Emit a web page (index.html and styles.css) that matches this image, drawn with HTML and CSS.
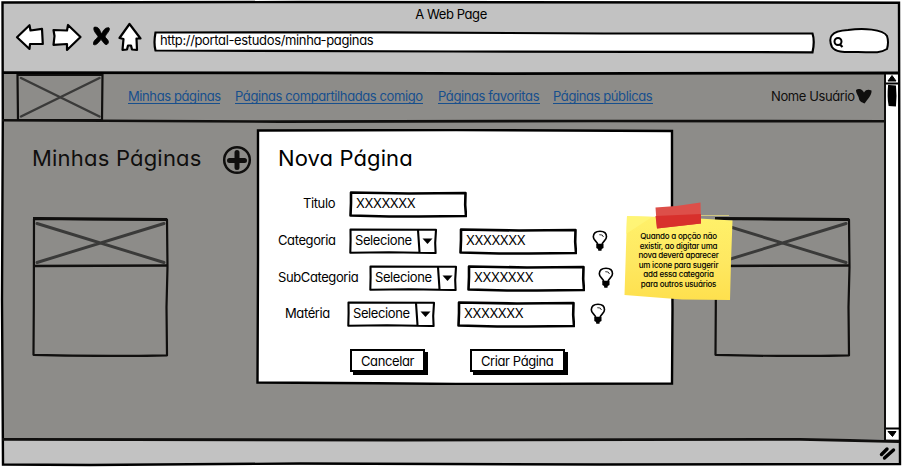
FILE: index.html
```
<!DOCTYPE html>
<html lang="pt-BR">
<head>
<meta charset="utf-8">
<title>A Web Page</title>
<link rel="stylesheet" href="styles.css">
</head>
<body>
<svg class="defs" aria-hidden="true">
  <symbol id="field" viewBox="0 0 118 27" preserveAspectRatio="none">
    <path d="M2 1.5 L60 2.5 L116.5 2 L116.200 14 L117 25 L70 25.5 L40 25.5 L1.5 24.5 L2 12 Z" fill="#fff" stroke="#000" stroke-width="2.6" stroke-linejoin="round"/>
  </symbol>
  <symbol id="select" viewBox="0 0 88 26">
    <path d="M1.5 1.5 L87 1.8 L86.2 15 L86.6 25 L40 24.3 L1.3 24.8 L1.6 12 Z M69 2 L70.5 24" fill="#fff" stroke="#000" stroke-width="2.1" stroke-linejoin="round"/>
    <path d="M73.500 10.500 H83.500 L78.500 16 Z"/>
  </symbol>
  <symbol id="card" viewBox="0 0 137 140">
    <path d="M2 2 L60 2.300 L135 2.700 L135.500 50 L134.500 90 L135 138.300 Q70 139.800 1.500 137.800 L1.800 90 Z" fill="none" stroke="#100f0e" stroke-width="2.200" stroke-linejoin="round"/>
    <path d="M1 1.400 L135 2.500" stroke="#100f0e" stroke-width="2.900"/>
    <path d="M2 49 L135 48.500" stroke="#100f0e" stroke-width="2.500"/>
    <path d="M5 6.500 L132 45.500 M5 45.500 L132 6.500" stroke="#3a3a39" stroke-width="2.900" stroke-linecap="round"/>
  </symbol>
  <symbol id="bulb" viewBox="0 0 16 22">
    <path d="M5.600 14.500 C5.600 11.500 1.200 10.500 1.300 6.700 C1.500 2.900 4.500 1.200 8 1.200 S14.500 3 14.500 6.700 C14.500 10.500 10.300 11.500 10.200 14.500 Z" fill="#fff" stroke="#000" stroke-width="1.600"/>
    <path d="M7.300 4.700 Q11 4.200 11.500 7" fill="none" stroke="#333" stroke-width="1"/>
    <path d="M4.300 14 H11.500 V18 L9.700 19 L9.500 20.700 H6.300 L6 19 L4.300 18 Z"/>
  </symbol>
</svg>
<div class="window">
  <header class="chrome">
    <div class="window-title"><span>A Web Page</span></div>
    <div class="toolbar">
      <svg class="nav-icons" viewBox="0 0 130 30">
        <g fill="#fff" stroke="#000" stroke-width="2.200" stroke-linejoin="round">
          <path d="M2 15.200 L14.500 3.200 L15.500 8.500 L27 6.800 L27.800 22 L15 22 L14.500 27 Z"/>
          <path d="M65.500 15 L53 3 L52 8.500 L38.500 8 L39.500 14 L38.500 22.800 L52 22 L52 28 Z"/>
          <path d="M114.500 2 L104.500 16 L108.500 17 L107.500 27.800 L112 27.500 L113 23.500 L116 23.500 L117 27.500 L122 28 L121.500 16.500 L125.500 16.500 Z"/>
        </g>
        <path d="M79 5.300 C84 4 85 9 86.500 12 C88 9 90 5 94 5.800 C96 8 91 12 90 15 C93 18 95 20 92 22.500 C89 23 88 19 86 17.500 C84 20 81 24 78.500 22.500 C78 18 82 17 83 14.500 C81 11 78 9 79 5.300Z" stroke="#000" stroke-width=".8"/>
      </svg>
      <div class="address">
        <svg class="fill" viewBox="0 0 661 23" preserveAspectRatio="none"><path d="M2.500 1.500 L230 1.300 L450 2.500 L658.500 2.500 Q661 10 658.500 21.300 L300 20.500 L2.500 19.500 Q.5 12 2.500 1.500Z" fill="#fff" stroke="#000" stroke-width="2.200"/></svg>
        <span>http://portal-estudos/minha-paginas</span>
      </div>
      <svg class="search" viewBox="0 0 62 26">
        <path d="M4 19 C0 10 2 3 20 2 C35 0 55 1 59 8 Q61 14 59 21 C51 26 42 24 30 24 C18 24 8 25 4 19Z" fill="#fff" stroke="#000" stroke-width="2"/>
        <circle cx="10" cy="13.500" r="3.500" fill="none" stroke="#000" stroke-width="2"/><path d="M11.500 16 L14.500 19" stroke="#000" stroke-width="2.200"/>
      </svg>
    </div>
  </header>
  <div class="body">
    <div class="page">
      <nav class="nav">
        <svg class="logo" viewBox="0 0 88 48">
          <path d="M1.500 2 H86.500 L86 47 H2 Z" fill="none" stroke="#100f0e" stroke-width="2.200"/>
          <path d="M5 5 L83.500 43.500 M5 43.500 L83.500 5" stroke="#3a3a39" stroke-width="2.500" stroke-linecap="round"/>
        </svg>
        <a class="link-own">Minhas páginas</a>
        <a class="link-shared">Páginas compartilhadas comigo</a>
        <a class="link-favorites">Páginas favoritas</a>
        <a class="link-public">Páginas públicas</a>
        <span class="user"><span class="user-name">Nome Usuário</span>
          <svg class="heart" viewBox="0 0 16 15"><path d="M0 1 C3 -1 6 0 8 3.500 C10 0 13 .5 15.500 1.500 C16 6 12 10 8.500 14.500 C5.500 13 4 13 3 10 C3 7 0 5 0 1Z"/></svg>
        </span>
      </nav>
      <div class="heading">
        <span class="heading-text">Minhas Páginas</span>
        <svg class="plus" viewBox="0 0 30 30"><circle cx="15" cy="15" r="12.800" fill="none" stroke="#100f0e" stroke-width="2.500"/><path d="M15 7.500 V22.500 M7.500 15.500 H22.500" stroke="#100f0e" stroke-width="5" stroke-linecap="round"/></svg>
      </div>
      <div class="cards">
        <svg class="card"><use href="#card"/></svg>
        <svg class="card"><use href="#card"/></svg>
      </div>
    </div>
    <div class="scrollbar">
      <svg viewBox="0 0 14 366">
        <path d="M0 10.500 H14 M0 355.500 H14" stroke="#000" stroke-width="1.800"/>
        <path d="M3 8 L7 2.500 L11 8Z M3 358.500 L11 358.500 L7.500 363.500Z" stroke="#000"/>
        <path d="M4 13 L10 13.500 Q11 23 10 32.500 L4.500 32 Q3 24 4 13Z" stroke="#000" stroke-width="2"/>
      </svg>
    </div>
  </div>
  <footer class="status">
    <svg class="grip" viewBox="0 0 18 16"><path d="M2.500 9.500 L8 4 M5.500 13 L14.500 5" stroke="#000" stroke-width="3.400" stroke-linecap="round"/></svg>
  </footer>
  <svg class="frame" viewBox="0 0 902 467">
    <g fill="none" stroke="#000" stroke-width="2">
      <path d="M2.500 2.500 L300 2 L899 2.700 L899.500 220 L900 464 L600 464.500 L300 463.500 L90 465 L3 464.500 L2 300 L2.800 120 Z" stroke-width="2.400"/>
      <path d="M2 72.700 L300 72.900 L500 73.600 L899 73" stroke-width="2.800"/>
      <path d="M2 120.300 L280 121.600 L600 121 L885 121.300" stroke="#100f0e" stroke-width="2.600"/>
      <path d="M2 439.300 L400 440 L800 439.300 L899 441.500" stroke="#100f0e" stroke-width="2.800"/>
      <path d="M885 74 V440" stroke="#100f0e" stroke-width="2"/>
    </g>
  </svg>

  <section class="modal">
    <svg class="fill" viewBox="0 0 418 256"><path d="M2 1.500 L200 1 L416 2 L416 100 L416.500 180 L416 254.500 L200 255 L120 254.300 L1.500 253.500 L2 130 Z" fill="#fff" stroke="#000" stroke-width="2.400"/></svg>
    <h2>Nova Página</h2>
    <form class="form">
      <div class="row r1">
        <label>Titulo</label>
        <div class="field"><svg class="fill"><use href="#field"/></svg><span>XXXXXXX</span></div>
      </div>
      <div class="row r2">
        <label>Categoria</label>
        <div class="select"><svg class="fill"><use href="#select"/></svg><span>Selecione</span></div>
        <div class="field"><svg class="fill"><use href="#field"/></svg><span>XXXXXXX</span></div>
        <svg class="bulb"><use href="#bulb"/></svg>
      </div>
      <div class="row r3">
        <label>SubCategoria</label>
        <div class="select"><svg class="fill"><use href="#select"/></svg><span>Selecione</span></div>
        <div class="field"><svg class="fill"><use href="#field"/></svg><span>XXXXXXX</span></div>
        <svg class="bulb"><use href="#bulb"/></svg>
      </div>
      <div class="row r4">
        <label>Matéria</label>
        <div class="select"><svg class="fill"><use href="#select"/></svg><span>Selecione</span></div>
        <div class="field"><svg class="fill"><use href="#field"/></svg><span>XXXXXXX</span></div>
        <svg class="bulb"><use href="#bulb"/></svg>
      </div>
      <div class="actions">
        <div class="button cancel"><span>Cancelar</span></div>
        <div class="button create"><span>Criar Página</span></div>
      </div>
    </form>
  </section>

  <aside class="note">
    <svg class="fill" viewBox="0 0 112 100">
      <defs><linearGradient id="paper" x1="0" y1="0" x2="0" y2="1"><stop offset="0" stop-color="#fff16a"/><stop offset=".55" stop-color="#fee861"/><stop offset="1" stop-color="#fee04e"/></linearGradient></defs>
      <path d="M75 13.500 H107" stroke="#cfc681" stroke-width="1"/>
      <path d="M5 14 L60 15.500 L110.500 18.500 L109 60 L108 98 L60 97.500 L2.500 93 Z" fill="url(#paper)"/>
      <path d="M5 14 L30 15 L4 32Z" fill="#fff67c" opacity=".7"/>
      <path d="M33.500 5.500 Q56 4.500 78.500 .5 L79 21.500 L35 26.500 Z" fill="#dd4f49"/>
      <path d="M33.500 14 L79 12 L79 21.500 L35 26.500Z" fill="#d8302c"/>
    </svg>
    <p>Quando a opção não<br>existir, ao digitar uma<br>nova deverá aparecer<br>um icone para sugerir<br>add essa categoria<br>para outros usuários</p>
  </aside>
</div>
</body>
</html>
```
FILE: styles.css
```
* { box-sizing: border-box; }
body {
  margin: 0;
  background: #fff;
  color: #000;
  font: 13px/16px Inter, "Liberation Sans", sans-serif;
  letter-spacing: -.4px;
  font-feature-settings: "cv11", "calt" 0;
}
svg { display: block; }
span, a, label, h2 { white-space: nowrap; }
.defs { position: absolute; width: 0; height: 0; }
.window { position: relative; width: 902px; height: 467px; padding: 2px; display: flex; flex-direction: column; overflow: hidden; }
.frame { position: absolute; inset: 0; width: 902px; height: 467px; }
.fill { position: absolute; inset: 0; width: 100%; height: 100%; }

.chrome { height: 71px; background: #c2c2c2; }
.window-title { height: 22px; padding-top: 4px; text-align: center; }
.toolbar { display: flex; align-items: flex-start; padding-left: 13px; }
.nav-icons { width: 130px; height: 30px; margin-top: -2px; }
.address { position: relative; width: 662px; height: 23px; margin: 7px 0 0 8px; padding: 1px 0 0 7px; letter-spacing: -.35px; }
.address span { position: relative; }
.search { width: 62px; height: 26px; margin: 4px 0 0 13px; }

.body { display: flex; height: 367px; }
.page { width: 883px; background: #8d8c89; color: #100f0e; }
.nav { display: flex; height: 48px; padding-left: 14px; }
.logo { width: 88px; height: 48px; margin-right: 24px; }
.nav a { height: 16px; margin-top: 15px; color: #174f8d; border-bottom: 1px solid #174f8d; }
.link-own { width: 92px; margin-right: 15px; }
.link-shared { width: 188px; margin-right: 15px; }
.link-favorites { width: 102px; margin-right: 13px; }
.link-public { width: 100px; }
.user { display: flex; margin: 15px 0 0 118px; }
.user-name { width: 83px; margin-right: 2px; }
.heart { width: 16px; height: 15px; margin-top: 1px; fill: #100f0e; }
.heading { display: flex; height: 96px; padding: 24px 0 0 30px; font-size: 22px; line-height: 26px; letter-spacing: .2px; }
.heading-text { width: 190px; }
.plus { width: 30px; height: 30px; }
.cards { display: flex; justify-content: space-between; padding: 0 34px 0 30px; }
.card { width: 137px; height: 140px; }
.scrollbar { width: 14px; background: #fff; }
.scrollbar svg { width: 14px; height: 366px; }
.status { display: flex; justify-content: flex-end; height: 26px; padding: 6px 3px 0 0; background: #c2c2c2; }
.grip { width: 18px; height: 16px; }

.modal { position: absolute; left: 256px; top: 129px; width: 418px; height: 256px; padding: 16px 0 0 22px; }
.modal h2 { position: relative; height: 46px; margin: 0; font-size: 22px; line-height: 26px; font-weight: 400; letter-spacing: .1px; }
.form { position: relative; }
.row { display: flex; align-items: flex-start; height: 37px; }
.row label { padding-top: 4px; }
.r1 label { width: 71px; padding-left: 25px; }
.r2 label { width: 71px; }
.r3 label { width: 92px; }
.r4 label { width: 69px; padding-left: 7px; }
.r3 { height: 36px; }
.field { position: relative; width: 118px; height: 27px; padding: 4px 0 0 7px; }
.r2 .field, .r3 .field, .r4 .field { margin-left: 22px; }
.r3 .field { margin-left: 10px; }
.r3 .field, .r3 .select { left: -1px; }
.select { position: relative; width: 88px; height: 26px; padding: 4px 0 0 6px; }
.field span, .select span { position: relative; }
.bulb { width: 16px; height: 22px; margin: 2px 0 0 15px; }
.r3 .bulb { margin-left: 12px; }
.actions { display: flex; gap: 45px; padding: 11px 0 0 72px; }
.button { height: 23px; padding: 2px 0 0 9px; background: #fff; border: 2px solid #000; box-shadow: 3px 3px #000; }
.cancel { width: 75px; }
.create { width: 95px; }

.note { position: absolute; left: 622px; top: 202px; width: 112px; height: 100px; padding-top: 30px; }
.note p { position: relative; width: 113px; margin: 0; font-size: 8px; line-height: 9.5px; font-weight: 500; letter-spacing: -.22px; text-align: center; }
```
